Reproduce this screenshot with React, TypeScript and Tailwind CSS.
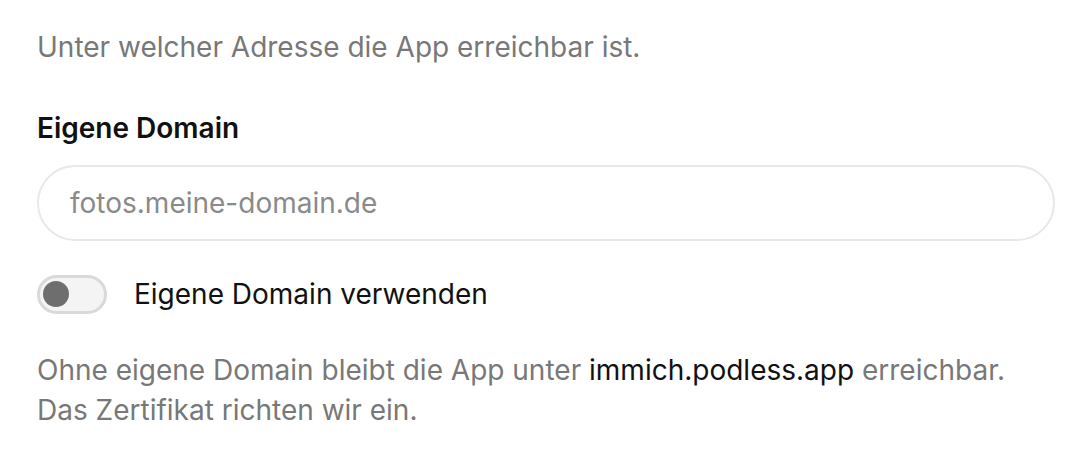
import React, { useState } from 'react'

export default function App() {
  const [useOwnDomain, setUseOwnDomain] = useState(false)
  const [domain, setDomain] = useState('')

  return (
    <div
      className="min-h-screen bg-white pl-[37px] pr-[29px] pt-[27px] text-[28px] leading-[40px]"
      style={{ fontFamily: 'Inter, "Noto Sans", sans-serif' }}
    >
      <p className="text-[#787878]">Unter welcher Adresse die App erreichbar ist.</p>

      <label htmlFor="domain" className="mt-[41px] block font-semibold text-[#111111]">
        Eigene Domain
      </label>

      <input
        id="domain"
        type="text"
        value={domain}
        onChange={(e) => setDomain(e.target.value)}
        placeholder="fotos.meine-domain.de"
        className="mt-[17px] block h-[76px] w-full rounded-full border-2 border-[#e8e8e8] bg-white px-[31px] text-[28px] text-[#111111] outline-none placeholder:text-[#8a8a8a]"
      />

      <div className="mt-[33px] flex h-[40px] items-center gap-[27px]">
        <button
          type="button"
          role="switch"
          aria-checked={useOwnDomain}
          onClick={() => setUseOwnDomain((v) => !v)}
          className="flex h-[39px] w-[70px] shrink-0 items-center rounded-full border-[3px] border-[#d9d9d9] bg-[#f4f4f4] px-[3px]"
        >
          <span className="block h-[26px] w-[26px] rounded-full bg-[#6e6e6e]" />
        </button>
        <span className="text-[#111111]">Eigene Domain verwenden</span>
      </div>

      <p className="mt-[36px] text-[#787878]">
        Ohne eigene Domain bleibt die App unter <span className="text-[#111111]">immich.podless.app</span> erreichbar.
        <br />
        Das Zertifikat richten wir ein.
      </p>
    </div>
  )
}
